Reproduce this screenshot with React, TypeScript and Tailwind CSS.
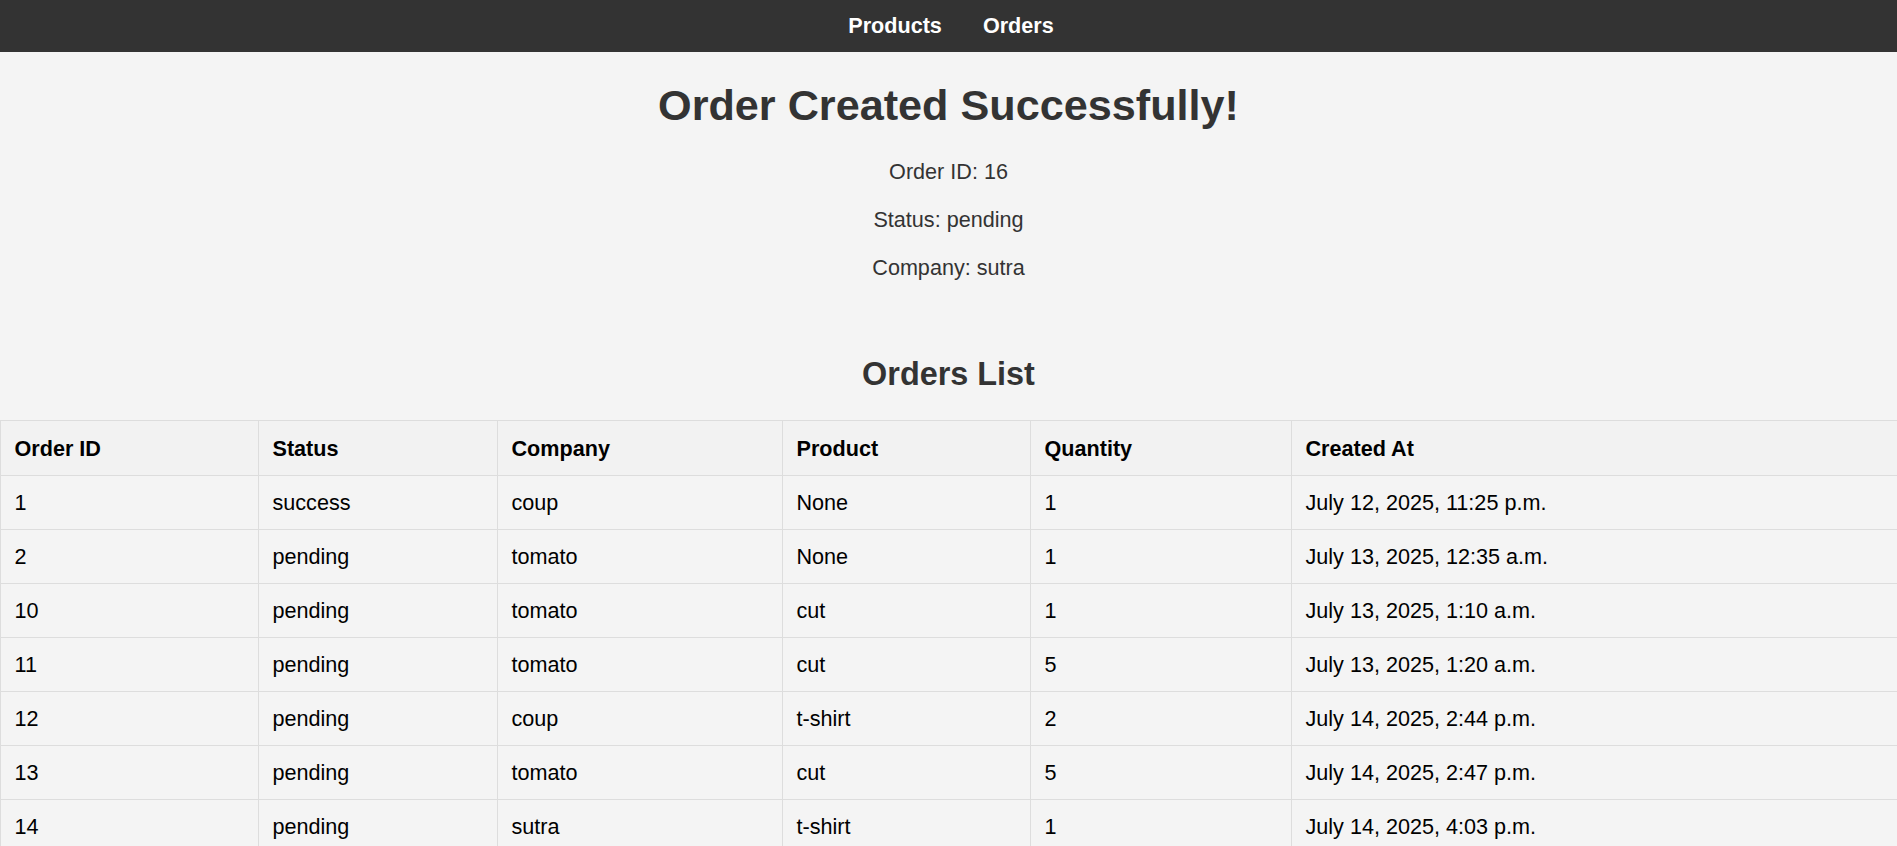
const ORDERS = [
  { id: 1, status: 'success', company: 'coup', product: 'None', qty: 1, created: 'July 12, 2025, 11:25 p.m.' },
  { id: 2, status: 'pending', company: 'tomato', product: 'None', qty: 1, created: 'July 13, 2025, 12:35 a.m.' },
  { id: 10, status: 'pending', company: 'tomato', product: 'cut', qty: 1, created: 'July 13, 2025, 1:10 a.m.' },
  { id: 11, status: 'pending', company: 'tomato', product: 'cut', qty: 5, created: 'July 13, 2025, 1:20 a.m.' },
  { id: 12, status: 'pending', company: 'coup', product: 't-shirt', qty: 2, created: 'July 14, 2025, 2:44 p.m.' },
  { id: 13, status: 'pending', company: 'tomato', product: 'cut', qty: 5, created: 'July 14, 2025, 2:47 p.m.' },
  { id: 14, status: 'pending', company: 'sutra', product: 't-shirt', qty: 1, created: 'July 14, 2025, 4:03 p.m.' },
];

const HEADERS = ['Order ID', 'Status', 'Company', 'Product', 'Quantity', 'Created At'];

export default function App() {
  return (
    <div className="min-h-screen bg-[#f4f4f4] font-['Liberation_Sans',Arial,sans-serif] text-[21.6px]">
      <nav className="bg-[#333] py-[13.5px] pl-[5px] flex justify-center gap-[41px] leading-[24.8px]">
        <a href="#" className="text-white font-bold">Products</a>
        <a href="#" className="text-white font-bold">Orders</a>
      </nav>

      <div className="text-center text-[#333]">
        <h1 className="text-[43.2px] leading-[49.6px] font-bold mt-[29px] mb-[30px]">Order Created Successfully!</h1>
        <p className="leading-[24.8px]">Order ID: 16</p>
        <p className="leading-[24.8px] mt-[23px]">Status: pending</p>
        <p className="leading-[24.8px] mt-[23px]">Company: sutra</p>

        <h2 className="text-[32.4px] leading-[37.2px] font-bold mt-[75.5px] mb-[27px]">Orders List</h2>
      </div>

      <table className="w-full border-collapse table-fixed text-black text-left">
        <colgroup>
          <col className="w-[258px]" />
          <col className="w-[239px]" />
          <col className="w-[285px]" />
          <col className="w-[248px]" />
          <col className="w-[261px]" />
          <col />
        </colgroup>
        <thead>
          <tr className="bg-[#f2f2f2]">
            {HEADERS.map((h, i) => (
              <th
                key={h}
                className={`border-y border-l border-[#ddd] px-[13.5px] py-[14.5px] leading-[25px] font-bold ${i === HEADERS.length - 1 ? 'border-r-0' : 'border-r'}`}
              >
                {h}
              </th>
            ))}
          </tr>
        </thead>
        <tbody>
          {ORDERS.map((o) => (
            <tr key={o.id}>
              {[o.id, o.status, o.company, o.product, o.qty, o.created].map((v, i) => (
                <td
                  key={i}
                  className={`border-y border-l border-[#ddd] px-[13.5px] py-[14px] leading-[25px] ${i === 5 ? 'border-r-0' : 'border-r'}`}
                >
                  {v}
                </td>
              ))}
            </tr>
          ))}
        </tbody>
      </table>
    </div>
  );
}
